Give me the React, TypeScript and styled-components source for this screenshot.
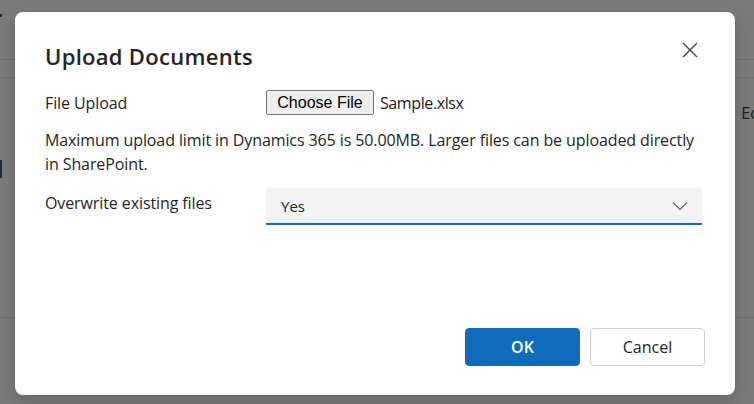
import React from 'react';
import styled, { createGlobalStyle } from 'styled-components';

const GlobalStyle = createGlobalStyle`
  html, body {
    margin: 0;
    padding: 0;
    width: 754px;
    height: 404px;
    overflow: hidden;
    background: #7a7a7a;
  }
  * {
    box-sizing: border-box;
  }
`;

const colors = {
  brand: '#0f6cbd',
  text: '#242424',
  field: '#f3f3f3',
  stroke: '#d1d1d1',
};

const Page = styled.div`
  position: relative;
  width: 754px;
  height: 404px;
  background: #7a7a7a;
  font-family: 'Open Sans', 'Noto Sans', sans-serif;
`;

const PageHeader = styled.div`
  height: 60px;
  border-bottom: 1px solid #6c6c6c;
`;

const PageTabs = styled.div`
  height: 18px;
  border-bottom: 1px solid #707070;
`;

const PageBody = styled.div`
  height: 240px;
  display: flex;
  justify-content: flex-end;
  padding-top: 24px;
  border-bottom: 1px solid #6c6c6c;
`;

const PageHint = styled.span`
  font-size: 16px;
  color: #1d1d1d;
  margin-right: -6px;
`;

const Mark = styled.div<{ top: number; height: number }>`
  position: absolute;
  left: 0;
  top: ${({ top }) => top}px;
  width: 2px;
  height: ${({ height }) => height}px;
  background: #1c2a3c;
`;

const Dialog = styled.div`
  position: absolute;
  left: 15px;
  top: 12px;
  width: 720px;
  height: 383px;
  background: #ffffff;
  border-radius: 8px;
  box-shadow: 0 8px 16px rgba(0, 0, 0, 0.14), 0 0 2px rgba(0, 0, 0, 0.12);
  padding: 24px 30px 29px 30px;
  display: flex;
  flex-direction: column;
  color: ${colors.text};
`;

const TitleBar = styled.div`
  display: flex;
  justify-content: space-between;
  align-items: flex-start;
  margin-bottom: 20px;
`;

const Title = styled.h2`
  margin: 6px 0 0 0;
  font-size: 22px;
  font-weight: 600;
  line-height: 28px;
  letter-spacing: 0.3px;
`;

const CloseButton = styled.button`
  border: 0;
  background: transparent;
  padding: 0;
  width: 24px;
  height: 24px;
  margin: 2px 3px 0 0;
  display: flex;
  align-items: center;
  justify-content: center;
  cursor: pointer;
`;

const Row = styled.div<{ gap?: number }>`
  display: grid;
  grid-template-columns: 221px 1fr;
  align-items: start;
  margin-bottom: ${({ gap }) => gap ?? 0}px;
`;

const Label = styled.label<{ offset?: number }>`
  font-size: 16px;
  line-height: 22px;
  letter-spacing: -0.1px;
  padding-top: ${({ offset }) => offset ?? 0}px;
`;

const FilePicker = styled.div`
  display: flex;
  align-items: center;
  gap: 6px;
`;

const ChooseButton = styled.button`
  font-family: 'Liberation Sans', Arial, sans-serif;
  font-size: 16px;
  height: 25px;
  width: 108px;
  padding: 0;
  background: #efefef;
  border: 1px solid #767676;
  border-radius: 2px;
  color: #000;
`;

const FileName = styled.span`
  font-size: 16px;
  color: #1a1a1a;
  letter-spacing: -0.4px;
`;

const Note = styled.p`
  margin: 0 0 12px 0;
  padding-right: 8px;
  font-size: 16px;
  line-height: 24px;
  letter-spacing: -0.1px;
`;

const SelectBox = styled.div`
  height: 37px;
  width: 436px;
  background: ${colors.field};
  border-radius: 4px 4px 0 0;
  border-bottom: 2px solid ${colors.brand};
  display: flex;
  align-items: center;
  justify-content: space-between;
  padding: 0 14px 0 15px;
  font-size: 15px;
`;

const Footer = styled.div`
  margin-top: auto;
  display: flex;
  justify-content: flex-end;
  gap: 10px;
`;

const ActionButton = styled.button<{ primary?: boolean }>`
  width: 115px;
  height: 38px;
  border-radius: 4px;
  font-family: 'Open Sans', 'Noto Sans', sans-serif;
  font-size: 16px;
  font-weight: ${({ primary }) => (primary ? 600 : 400)};
  background: ${({ primary }) => (primary ? colors.brand : '#ffffff')};
  color: ${({ primary }) => (primary ? '#ffffff' : colors.text)};
  border: 1px solid ${({ primary }) => (primary ? colors.brand : colors.stroke)};
  cursor: pointer;
`;

const CloseIcon = () => (
  <svg width="16" height="16" viewBox="0 0 16 16">
    <path d="M1 1 L15 15 M15 1 L1 15" stroke="#424242" strokeWidth="1.4" fill="none" />
  </svg>
);

const Chevron = () => (
  <svg width="16" height="10" viewBox="0 0 16 10">
    <path d="M1 1.5 L8 8.5 L15 1.5" stroke="#616161" strokeWidth="1.1" fill="none" />
  </svg>
);

const App: React.FC = () => (
  <>
    <GlobalStyle />
    <Page>
      <PageHeader />
      <PageTabs />
      <PageBody>
        <PageHint>Ed</PageHint>
      </PageBody>
      <Mark top={14} height={3} />
      <Mark top={160} height={18} />
      <Dialog role="dialog">
        <TitleBar>
          <Title>Upload Documents</Title>
          <CloseButton aria-label="Close">
            <CloseIcon />
          </CloseButton>
        </TitleBar>
        <Row gap={13}>
          <Label offset={2}>File Upload</Label>
          <FilePicker>
            <ChooseButton type="button">Choose File</ChooseButton>
            <FileName>Sample.xlsx</FileName>
          </FilePicker>
        </Row>
        <Note>
          Maximum upload limit in Dynamics 365 is 50.00MB. Larger files can be uploaded directly
          in SharePoint.
        </Note>
        <Row>
          <Label offset={4}>Overwrite existing files</Label>
          <SelectBox>
            <span>Yes</span>
            <Chevron />
          </SelectBox>
        </Row>
        <Footer>
          <ActionButton primary type="button">OK</ActionButton>
          <ActionButton type="button">Cancel</ActionButton>
        </Footer>
      </Dialog>
    </Page>
  </>
);

export default App;
